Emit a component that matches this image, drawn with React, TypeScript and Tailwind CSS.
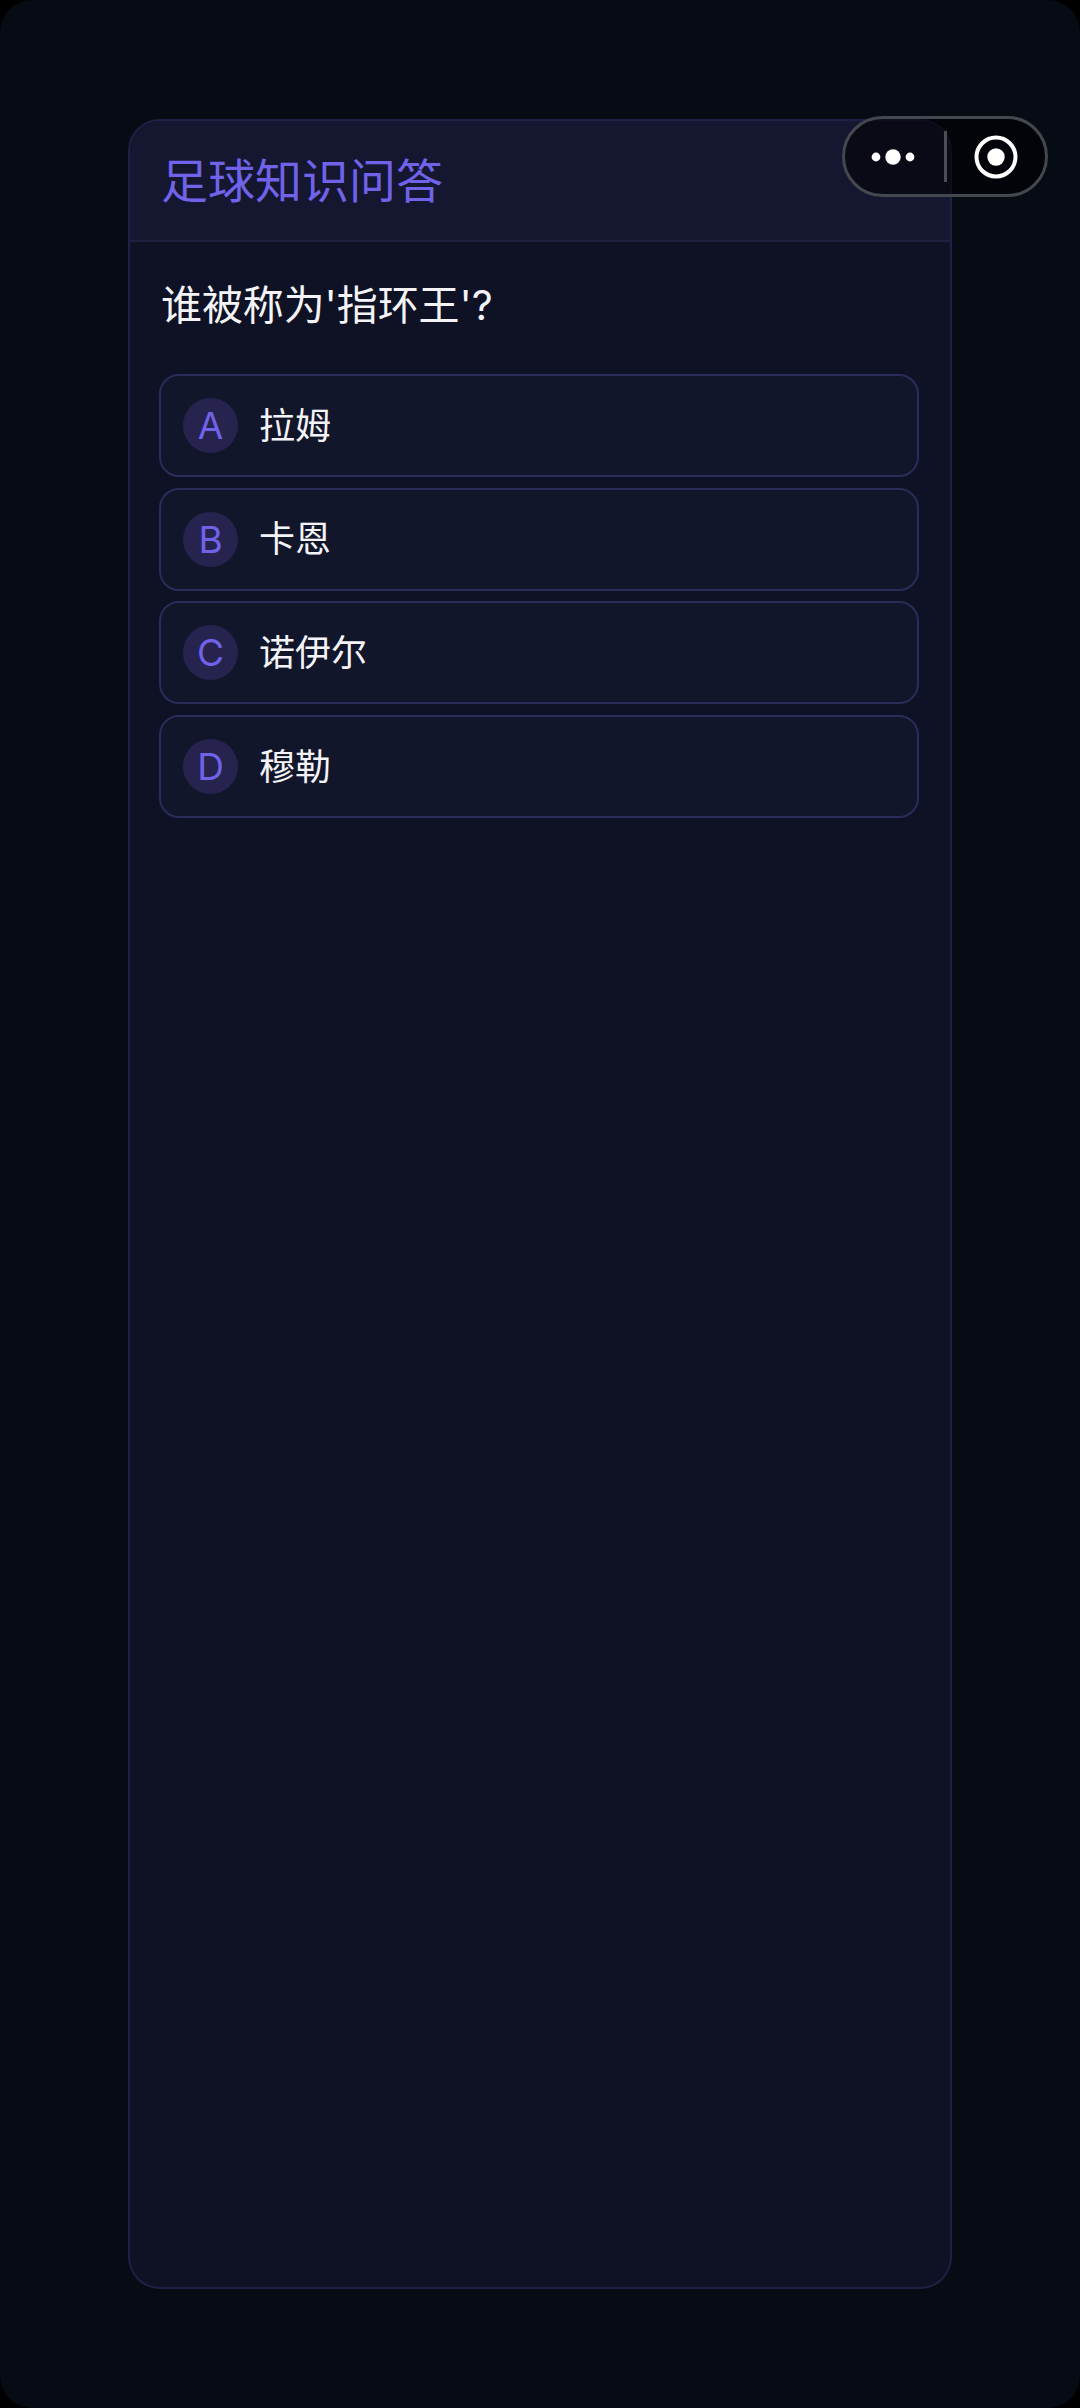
import React from 'react';

const FONT = "font-['Inter','Noto_Sans_CJK_SC',sans-serif]";

const OPTIONS = [
  { key: 'A', text: '拉姆' },
  { key: 'B', text: '卡恩' },
  { key: 'C', text: '诺伊尔' },
  { key: 'D', text: '穆勒' },
];

function Capsule() {
  return (
    <div className="absolute left-[842px] top-[116px] flex h-[81px] w-[206px] items-center rounded-full border-[3px] border-[#45474f] bg-black/55">
      <div className="flex h-full w-[99px] items-center justify-center pr-[3px]">
        <svg width="44" height="20" viewBox="0 0 44 20" fill="#fff">
          <circle cx="5" cy="10" r="4.4" />
          <circle cx="22" cy="10" r="7.7" />
          <circle cx="39" cy="10" r="4.4" />
        </svg>
      </div>
      <div className="h-[51px] w-[2.5px] bg-[#4b4d55]" />
      <div className="flex h-full flex-1 items-center justify-center">
        <svg width="44" height="44" viewBox="0 0 44 44" fill="none">
          <circle cx="22" cy="22" r="19.5" stroke="#fff" strokeWidth="4" />
          <circle cx="22" cy="22" r="8.7" fill="#fff" />
        </svg>
      </div>
    </div>
  );
}

export default function App() {
  return (
    <div className="bg-black">
      <div className={`relative h-[2408px] w-[1080px] overflow-hidden rounded-[32px] bg-[#070b14] pb-[119px] pl-[128px] pr-[128px] pt-[119px] ${FONT}`}>
        <div className="flex h-full flex-col overflow-hidden rounded-[32px] border-2 border-[#1f2144] bg-[#0e1224]">
          {/* header */}
          <div className="flex h-[121px] shrink-0 items-center border-b-2 border-[#1e2040] bg-[#14172f] pl-[31px]">
            <h1 className="text-[47px] leading-none font-normal text-[#7063ea]">足球知识问答</h1>
          </div>

          <div className="flex flex-col pl-[29px] pr-[31px]">
            <p className="ml-[2px] mt-[36px] text-[41px] leading-[54px] tracking-[-0.1px] text-[#f4f4f8]">谁被称为'指环王'?</p>

            <div className="mt-[42px] flex flex-col gap-[10.7px]">
              {OPTIONS.map((o) => (
                <div
                  key={o.key}
                  className="flex h-[103px] items-center rounded-[20px] border-2 border-[#2a2c5a] bg-[#12162a] pl-[22px]"
                >
                  <span className="flex h-[55px] w-[55px] items-center justify-center rounded-full bg-[#26234f] text-[37px] leading-none font-normal text-[#7063ea]">
                    {o.key}
                  </span>
                  <span className="ml-[21px] text-[36px] leading-none text-[#f4f4f8]">{o.text}</span>
                </div>
              ))}
            </div>
          </div>
        </div>

        <Capsule />
      </div>
    </div>
  );
}
